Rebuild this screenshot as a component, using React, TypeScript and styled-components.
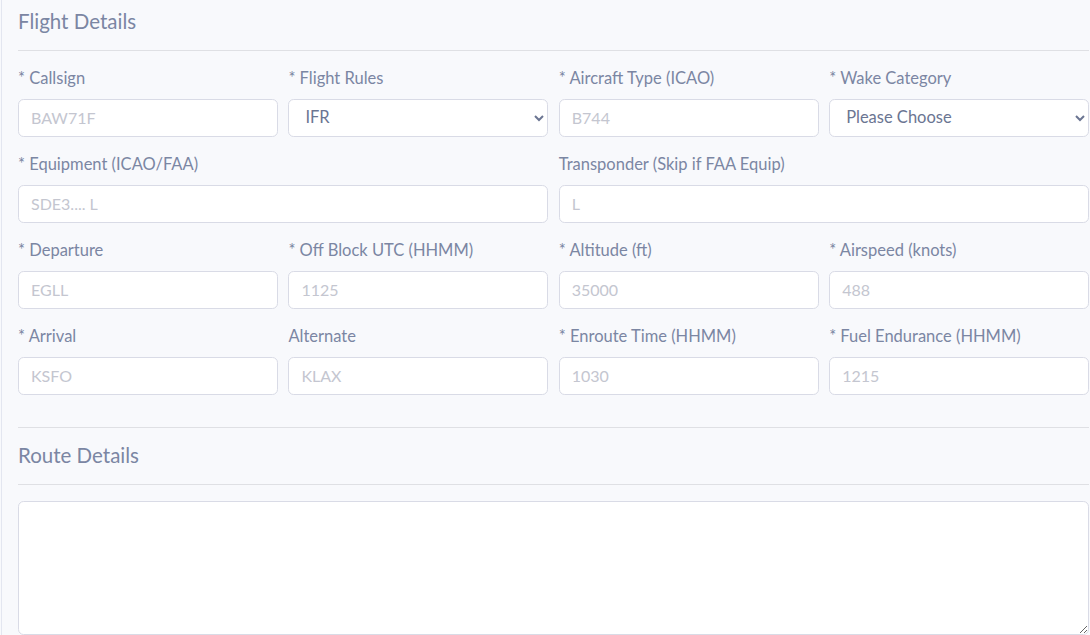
import styled, { createGlobalStyle } from 'styled-components';

const GlobalStyle = createGlobalStyle`
  html, body {
    margin: 0;
    padding: 0;
    background: #f8f9fc;
  }
  body {
    font-family: 'Lato', 'Noto Sans', Arial, sans-serif;
    font-size: 16px;
    line-height: 1.5;
    color: #7b86a3;
    overflow: hidden;
  }
`;

const Page = styled.div`
  margin-left: 1px;
  border-left: 1px solid #e3e6f0;
  padding: 10px 1px 0 16px;
  min-height: 635px;
  box-sizing: border-box;
`;

const SectionTitle = styled.h5`
  margin: 0;
  padding-bottom: 2px;
  font-size: 20.5px;
  font-weight: 400;
  line-height: 22px;
  color: #7b86a3;
`;

const Divider = styled.hr`
  margin: 16px 0;
  border: 0;
  border-top: 1px solid #dfe0e4;
`;

const FieldGrid = styled.div`
  display: grid;
  grid-template-columns: repeat(4, 1fr);
  column-gap: 10.5px;
`;

const Group = styled.div<{ span?: number }>`
  grid-column: span ${({ span }) => span ?? 1};
  margin-bottom: 16px;
  display: flex;
  flex-direction: column;
`;

const Label = styled.label`
  display: block;
  margin-bottom: 10px;
  font-size: 16.5px;
  line-height: 22px;
  color: #7b86a3;
  white-space: nowrap;
`;

const controlBase = `
  box-sizing: border-box;
  width: 100%;
  font-family: inherit;
  font-size: 16px;
  color: #6b7592;
  background: #fff;
  border: 1px solid #d9dbe6;
  border-radius: 5.6px;
  outline: none;
`;

const Input = styled.input`
  ${controlBase}
  height: 38px;
  padding: 5px 12px 7px;
  line-height: 24px;

  &::placeholder {
    color: #c4c6d0;
  }
`;

const Select = styled.select`
  ${controlBase}
  height: 38px;
  padding: 5px 8px 7px 12px;
  font-size: 16.5px;
`;

const RouteArea = styled.textarea`
  ${controlBase}
  display: block;
  height: 134px;
  padding: 6px 12px;
  resize: vertical;
`;

type Field = {
  label: string;
  placeholder?: string;
  options?: string[];
  span?: number;
};

const fields: Field[] = [
  { label: '* Callsign', placeholder: 'BAW71F' },
  { label: '* Flight Rules', options: ['IFR', 'VFR'] },
  { label: '* Aircraft Type (ICAO)', placeholder: 'B744' },
  { label: '* Wake Category', options: ['Please Choose', 'Light', 'Medium', 'Heavy', 'Super'] },
  { label: '* Equipment (ICAO/FAA)', placeholder: 'SDE3.... L', span: 2 },
  { label: 'Transponder (Skip if FAA Equip)', placeholder: 'L', span: 2 },
  { label: '* Departure', placeholder: 'EGLL' },
  { label: '* Off Block UTC (HHMM)', placeholder: '1125' },
  { label: '* Altitude (ft)', placeholder: '35000' },
  { label: '* Airspeed (knots)', placeholder: '488' },
  { label: '* Arrival', placeholder: 'KSFO' },
  { label: 'Alternate', placeholder: 'KLAX' },
  { label: '* Enroute Time (HHMM)', placeholder: '1030' },
  { label: '* Fuel Endurance (HHMM)', placeholder: '1215' },
];

export default function App() {
  return (
    <>
      <GlobalStyle />
      <Page>
        <SectionTitle>Flight Details</SectionTitle>
        <Divider />
        <FieldGrid>
          {fields.map((f) => (
            <Group key={f.label} span={f.span}>
              <Label>{f.label}</Label>
              {f.options ? (
                <Select defaultValue={f.options[0]}>
                  {f.options.map((o) => (
                    <option key={o}>{o}</option>
                  ))}
                </Select>
              ) : (
                <Input placeholder={f.placeholder} />
              )}
            </Group>
          ))}
        </FieldGrid>
        <Divider />
        <SectionTitle>Route Details</SectionTitle>
        <Divider />
        <RouteArea />
      </Page>
    </>
  );
}
